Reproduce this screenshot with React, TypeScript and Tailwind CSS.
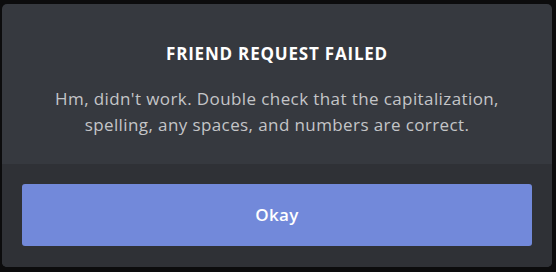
export default function App() {
    return (
        <div className="w-[556px] h-[272px] bg-[#0c0c0d] pt-[4px] pl-[2px]" style={{ fontFamily: '"Open Sans", "Noto Sans", sans-serif' }}>
            <div className="w-[550px] h-[263px] rounded-[5px] overflow-hidden flex flex-col bg-[#36393f]">
                <div className="h-[160px] flex flex-col items-center pt-[38px]">
                    <h3 className="text-white font-bold text-[17px] leading-[24px] tracking-[0.8px] uppercase">Friend Request Failed</h3>
                    <p className="mt-[20px] text-[#c4c5c8] text-[17px] leading-[26px] text-center tracking-[0.4px]">
                        Hm, didn't work. Double check that the capitalization,
                        <br />
                        spelling, any spaces, and numbers are correct.
                    </p>
                </div>
                <div className="flex-1 bg-[#2f3136] px-[20px] pt-[20px]">
                    <button className="w-full h-[62px] rounded-[3px] bg-[#7289da] text-white text-[17px] tracking-[0.3px] font-semibold">Okay</button>
                </div>
            </div>
        </div>
    )
}
